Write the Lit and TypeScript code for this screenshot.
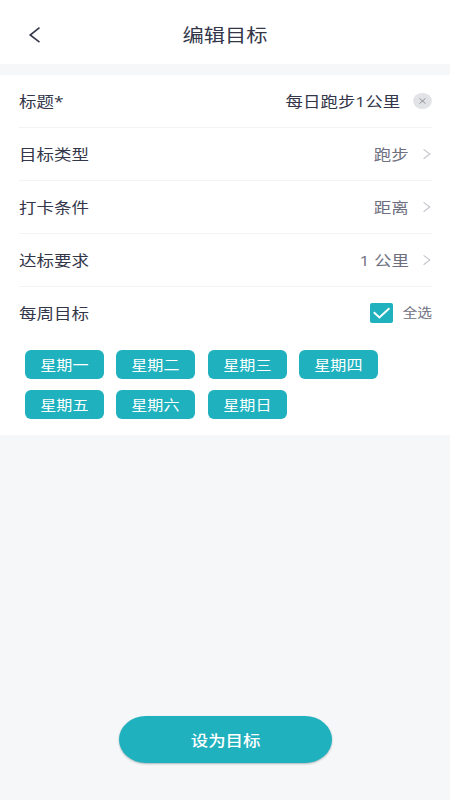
import { LitElement, html, css, svg } from "lit";
import { customElement } from "lit/decorators.js";

const chevron = html`<svg class="chevron" width="8" height="12" viewBox="0 0 8 12" fill="none">
  ${svg`<path d="M0.6 1.4 L6.8 6 L0.6 10.8" stroke="#c3c5cb" stroke-width="1.1" />`}
</svg>`;

@customElement("app-root")
export class AppRoot extends LitElement {
  static styles = css`
    :host {
      display: flex;
      flex-direction: column;
      box-sizing: border-box;
      width: 450px;
      height: 800px;
      overflow: hidden;
      background: #f5f7f9;
      color: #34364a;
      font-family: "Open Sans", "Noto Sans CJK SC", sans-serif;
      font-size: 14.8px;
      line-height: 24px;
    }
    .t {
      display: inline-block;
      white-space: pre;
      transform: scaleX(1.18);
      transform-origin: center;
    }
    .left { transform-origin: left; }
    .right { transform-origin: right; }
    header {
      display: grid;
      grid-template-columns: 60px 1fr 60px;
      align-items: center;
      height: 64px;
      padding-top: 5px;
      box-sizing: border-box;
      background: #fff;
      text-align: center;
      font-size: 18px;
    }
    .back { display: block; margin-left: 28px; }
    .card {
      margin-top: 11px;
      height: 360px;
      padding: 0 18px 0 19px;
      box-sizing: border-box;
      background: #fff;
    }
    .row {
      display: flex;
      align-items: center;
      height: 53px;
      box-sizing: border-box;
      border-bottom: 1px solid #f3f3f5;
    }
    .row.last { height: 52px; border: 0; }
    .label { flex: 1; }
    .value { color: #6e7080; }
    .title { color: #34364a; }
    .chevron { margin: 0 1px 0 14px; }
    .clear { margin-left: 13px; }
    .check { margin-right: 9px; }
    .all { width: 30px; text-align: right; font-size: 12.6px; color: #6e7080; }
    .days {
      display: grid;
      grid-template-columns: repeat(4, 79px);
      gap: 11px 12.3px;
      padding: 11px 0 0 6px;
    }
    .day {
      height: 29px;
      border-radius: 6px;
      background: #1fb1be;
      color: #fff;
      font-size: 13.6px;
      line-height: 30px;
      text-align: center;
    }
    .submit {
      margin: auto auto 37px 119px;
      width: 213px;
      height: 47px;
      padding: 0;
      border: 0;
      border-radius: 27px / 23.5px;
      background: #1fb1be;
      box-shadow: 0 1px 2px rgba(40, 60, 70, 0.35);
      color: #fff;
      font: 500 14.8px/48px "Open Sans", "Noto Sans CJK SC", sans-serif;
    }
  `;

  private fields = [
    ["目标类型", "跑步"],
    ["打卡条件", "距离"],
    ["达标要求", "1 公里"],
  ];

  render() {
    return html`
      <header>
        <svg class="back" width="14" height="18" viewBox="0 0 14 18" fill="none">
          <path d="M11.5 1.7 L2.2 9 L11.5 16.2" stroke="#34364a" stroke-width="1.6" />
        </svg>
        <span><span class="t">编辑目标</span></span>
      </header>
      <section class="card">
        <div class="row">
          <span class="label"><span class="t left">标题*</span></span>
          <span class="t right title">每日跑步1公里</span>
          <svg class="clear" width="19" height="16" viewBox="0 0 19 16">
            <ellipse cx="9.5" cy="8" rx="9.4" ry="8" fill="#e2e3e7" />
            <path d="M6.5 5.4 L12.5 10.6 M12.5 5.4 L6.5 10.6" stroke="#8f919b" stroke-width="1" />
          </svg>
        </div>
        ${this.fields.map(
          ([label, value]) => html`<div class="row">
            <span class="label"><span class="t left">${label}</span></span>
            <span class="t right value">${value}</span>
            ${chevron}
          </div>`
        )}
        <div class="row last">
          <span class="label"><span class="t left">每周目标</span></span>
          <svg class="check" width="23" height="20" viewBox="0 0 23 20" fill="none">
            <rect width="23" height="20" rx="2" fill="#1fb1be" />
            <path d="M3.8 9.3 L9.4 14.5 L19.4 5.2" stroke="#fff" stroke-width="2" />
          </svg>
          <span class="all"><span class="t right">全选</span></span>
        </div>
        <div class="days">
          ${[..."一二三四五六日"].map(
            (d) => html`<div class="day"><span class="t">星期${d}</span></div>`
          )}
        </div>
      </section>
      <button class="submit"><span class="t">设为目标</span></button>
    `;
  }
}
